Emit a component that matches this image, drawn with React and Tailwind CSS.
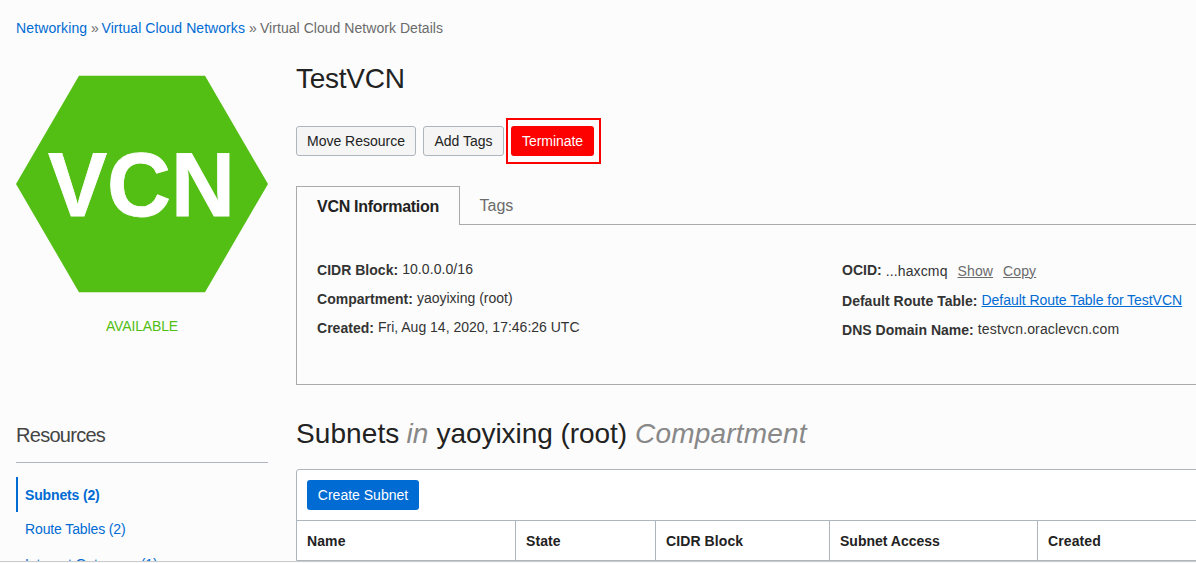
const columns = [
  { label: "Name", width: "w-[219px]", tracking: "tracking-[0.1px]" },
  { label: "State", width: "w-[140px]", tracking: "tracking-[0.1px]" },
  { label: "CIDR Block", width: "w-[174px]", tracking: "tracking-[0.1px]" },
  { label: "Subnet Access", width: "w-[208px]", tracking: "tracking-normal" },
  { label: "Created", width: "w-[240px]", tracking: "tracking-[0.1px]" },
];

function Breadcrumbs() {
  return (
    <nav className="flex h-5 items-center pl-4 leading-5 text-[#6b6b6b]">
      <a className="w-[75px] tracking-[0.12px] text-[#006bd3]">Networking</a>
      <span className="w-[10.5px]">»</span>
      <a className="w-[147.5px] tracking-[0.06px] text-[#006bd3]">Virtual Cloud Networks</a>
      <span className="w-[11px]">»</span>
      <span className="tracking-[0.04px]">Virtual Cloud Network Details</span>
    </nav>
  );
}

function Sidebar() {
  return (
    <aside className="flex w-[252px] shrink-0 flex-col">
      <svg className="mt-[37px] block h-[218px] w-[252px]" viewBox="0 0 252 218">
        <polygon points="63,0.8 189,0.8 252,109 189,217.2 63,217.2 0,109" fill="#53be13" />
        <text
          x="32"
          y="141"
          fill="#fff"
          stroke="#fff"
          strokeWidth="0.8"
          fontFamily="Liberation Sans, Arial, sans-serif"
          fontWeight="700"
          fontSize="91"
          textLength="187"
          lengthAdjust="spacingAndGlyphs"
        >
          VCN
        </text>
      </svg>
      <div className="mt-[23px] h-5 text-center leading-5 tracking-[-0.15px] text-[#53be13]">AVAILABLE</div>
      <h2 className="mt-[85px] h-[42px] border-b border-[#afb5bd] text-[20px] leading-7 tracking-[-0.72px] text-[#444]">
        Resources
      </h2>
      <ul className="mt-[14px] leading-5 text-[#006bd3]">
        <li className="flex h-[35px] items-center border-l-2 border-[#006bd3] pl-[7px] font-bold tracking-[-0.15px]">
          Subnets (2)
        </li>
        <li className="flex h-[34px] items-center border-l-2 border-transparent pl-[7px] tracking-[-0.12px]">
          Route Tables (2)
        </li>
        <li className="flex h-[34px] items-center border-l-2 border-transparent pl-[7px] pt-[2px] tracking-[-0.1px]">
          Internet Gateways (1)
        </li>
      </ul>
    </aside>
  );
}

function Actions() {
  return (
    <div className="mt-5 flex h-[46px] items-center">
      <button className="h-[30px] w-[120px] rounded-[3px] border border-[#afb5bd] bg-[#f5f5f5] text-[#222]">
        Move Resource
      </button>
      <button className="ml-[7px] h-[30px] w-[81px] rounded-[3px] border border-[#afb5bd] bg-[#f5f5f5] text-[#222]">
        Add Tags
      </button>
      <div className="ml-[2px] flex h-[46px] w-[95px] items-center border-2 border-[#fa0000] pl-[3px]">
        <button className="h-[30px] w-[83px] rounded-[3px] bg-[#fd0000] tracking-[-0.06px] text-white">
          Terminate
        </button>
      </div>
    </div>
  );
}

function Field({ label, children }) {
  return (
    <div className="flex h-[29px] items-center gap-1 whitespace-nowrap">
      <span className="pt-px font-bold tracking-[0.02px]">{label}</span>
      {children}
    </div>
  );
}

function Details() {
  return (
    <section className="mt-[22px]">
      <div className="flex h-[39px] text-[16px]">
        <div className="flex w-[164px] items-center border-x border-t border-[#aaa] pl-5 pt-px font-bold tracking-[-0.28px] text-[#222]">
          VCN Information
        </div>
        <div className="flex grow items-center border-b border-[#aaa] pl-[19.5px] pt-[2px] text-[#6b6b6b]">
          Tags
        </div>
      </div>
      <div className="flex h-[160px] border-b border-l border-[#aaa] pl-5 pt-[30px] text-[#333]">
        <div className="w-[525px] shrink-0">
          <Field label="CIDR Block:">
            <span className="tracking-[0.08px]">10.0.0.0/16</span>
          </Field>
          <Field label="Compartment:">
            <span>yaoyixing (root)</span>
          </Field>
          <Field label="Created:">
            <span>Fri, Aug 14, 2020, 17:46:26 UTC</span>
          </Field>
        </div>
        <div>
          <Field label="OCID:">
            <span className="pt-[3px] tracking-[0.12px]">...haxcmq</span>
            <a className="ml-[6px] pt-[3px] tracking-[0.12px] text-[#6b6b6b] underline">Show</a>
            <a className="ml-[6px] pt-[3px] tracking-[0.12px] text-[#6b6b6b] underline">Copy</a>
          </Field>
          <div className="pt-[2px]">
            <Field label="Default Route Table:">
              <a className="tracking-[-0.04px] text-[#006bd3] underline">Default Route Table for TestVCN</a>
            </Field>
            <Field label="DNS Domain Name:">
              <span className="tracking-[0.14px]">testvcn.oraclevcn.com</span>
            </Field>
          </div>
        </div>
      </div>
    </section>
  );
}

function Subnets() {
  return (
    <section>
      <h2 className="mt-[30px] flex h-[38px] whitespace-nowrap text-[28px] leading-[38px] text-[#222]">
        <span className="w-[110.5px] tracking-[0.1px]">Subnets</span>
        <em className="w-[30px] text-[#888]">in</em>
        <span className="w-[198.5px] tracking-[-0.05px]">yaoyixing (root)</span>
        <em className="tracking-[0.18px] text-[#888]">Compartment</em>
      </h2>
      <div className="mt-4 h-[92px] w-[980px] rounded-t-[3px] border border-[#afb5bd] bg-white">
        <div className="flex h-[51px] items-center border-b border-[#afb5bd] pl-[10px]">
          <button className="h-[30px] w-[112px] rounded-[3px] bg-[#006bd3] text-white">Create Subnet</button>
        </div>
        <div className="flex h-[39px] font-bold text-[#222]">
          {columns.map((c) => (
            <div
              key={c.label}
              className={`${c.width} ${c.tracking} flex shrink-0 items-center border-r border-[#afb5bd] pl-[10px] pt-px`}
            >
              {c.label}
            </div>
          ))}
        </div>
      </div>
    </section>
  );
}

export default function App() {
  return (
    <div className="flex h-[563px] w-[1196px] flex-col overflow-hidden bg-[#fcfcfc] font-['Liberation_Sans',Arial,sans-serif] text-[14px]">
      <div className="flex h-[561px] shrink-0 flex-col overflow-hidden pt-[18px]">
        <Breadcrumbs />
        <div className="flex pl-4">
          <Sidebar />
          <main className="ml-7 w-[900px] shrink-0">
            <h1 className="mt-[22px] h-[38px] text-[28px] leading-[38px] tracking-[-0.25px] text-[#222]">TestVCN</h1>
            <Actions />
            <Details />
            <Subnets />
          </main>
        </div>
      </div>
      <div className="h-px shrink-0 bg-[#ccc]" />
      <div className="h-px shrink-0 bg-[#fafafa]" />
    </div>
  );
}
